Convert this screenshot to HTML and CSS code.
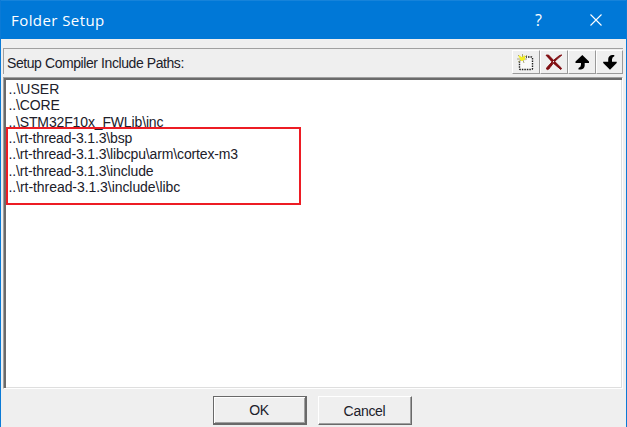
FILE: index.html
```html
<!DOCTYPE html>
<html lang="en">
<head>
<meta charset="utf-8">
<title>Folder Setup</title>
<link rel="stylesheet" href="styles.css">
</head>
<body>
<div class="window">
  <header class="titlebar">
    <h1 class="title">Folder Setup</h1>
    <span class="help">?</span>
    <svg class="close" width="12" height="12" viewBox="0 0 12 12"><path d="M.5 .5l11 11M11.5 .5l-11 11" stroke="#fff" stroke-width="1.1" fill="none"/></svg>
  </header>
  <main class="content">
    <div class="toolbar">
      <span class="label">Setup Compiler Include Paths:</span>
      <div class="tools">
        <button class="tool" aria-label="New"><svg width="18" height="17" viewBox="0 0 18 17"><rect x="2.5" y="3" width="13" height="12.5" rx="1" fill="#fafafa" stroke="#222" stroke-width="1.4" stroke-dasharray="1.5 1"/><path d="M0 0h9v7H0z" fill="#efefef"/><path d="M1 1l3 3M5.5 0v4M10 1L6 5M0 5h4M1 8l3-2M6 6l1 3M7 5h3" stroke="#aaa878" stroke-width="1"/><path d="M2 2l3 3M8 2L4 6M3 5l5 0M5 3v4" stroke="#f4ef28" stroke-width="1.8"/></svg></button>
        <button class="tool" aria-label="Delete"><svg width="18" height="17" viewBox="0 0 18 17"><path d="M1 1.2L3.5 1Q8 6 16.5 14.2L15.8 15.5Q9 10.5 1 1.2zM16.8 1L14.5 1.5Q8 6 2 13.5Q.8 15.5 2.5 15.6Q4 15.4 5 13.5Q9 7 16.8 1z" fill="#800c10" stroke="#800c10" stroke-width="1"/></svg></button>
        <button class="tool" aria-label="Move up"><svg width="18" height="17" viewBox="0 0 18 17"><path d="M9.3 1L16 7.6V9h-4.3v2.5Q11.5 15 8 15.5H5.5V14Q8 13 8 10.8V9H2.5V7.6z" fill="#000"/></svg></button>
        <button class="tool last" aria-label="Move down"><svg width="18" height="17" viewBox="0 0 18 17"><path d="M9 15.7L15.7 9V7.8H11V5.5Q11 3 13.3 2.3V1H11Q7.2 1.7 7.2 5.3V7.8H2.2V9z" fill="#000"/></svg></button>
      </div>
    </div>
    <div class="list">
      <ul class="paths">
        <li class="user">..\USER</li>
        <li>..\CORE</li>
        <li>..\STM32F10x_FWLib\inc</li>
        <li>..\rt-thread-3.1.3\bsp</li>
        <li>..\rt-thread-3.1.3\libcpu\arm\cortex-m3</li>
        <li>..\rt-thread-3.1.3\include</li>
        <li class="libc">..\rt-thread-3.1.3\include\libc</li>
      </ul>
      <div class="highlight"></div>
    </div>
    <footer class="actions">
      <button class="btn ok">OK</button>
      <button class="btn cancel">Cancel</button>
    </footer>
  </main>
</div>
</body>
</html>
```

FILE: styles.css
```css
* { box-sizing: border-box; }
body { margin: 0; font-family: "Liberation Sans", Arial, sans-serif; font-size: 14px; color: #20202a; }
button { font: inherit; color: inherit; padding: 0; margin: 0; border-radius: 0; }
svg { display: block; }
.window { width: 627px; height: 427px; overflow: hidden; background: #efefef; border: solid #0b7ad6; border-width: 0 1px; }
.titlebar { height: 39px; background: #0078d7; border-top: 1px solid #1683da; color: #fff; display: flex; align-items: center; padding: 0 24px 0 10px; }
.title { margin: 0; flex: 1; font: 400 15px/20px "Open Sans", "Noto Sans", sans-serif; letter-spacing: .43px; }
.help { font: 400 16px/20px "Open Sans", "Noto Sans", sans-serif; margin-right: 48px; }
.content { padding: 9px 3px 0 2px; }
.toolbar { height: 26px; display: flex; border: solid #a0a0a0; border-width: 1px 0 0 1px; }
.label { flex: 1; padding: 5px 0 0 3px; line-height: 18px; white-space: nowrap; letter-spacing: -.42px; }
.tools { display: flex; padding-top: 1px; }
.tool { width: 28px; height: 24px; background: #efefef; border: 1px solid; border-color: #fff #999 #999 #fff; display: flex; align-items: center; justify-content: center; }
.last { width: 27px; }
.list { position: relative; height: 312px; margin-top: 3px; background: #fff; border: 1px solid; border-color: #a0a0a0 #fff #fff #a0a0a0; box-shadow: inset 2px 2px #6b6b6b, inset -1px -1px #dedede; }
.paths { list-style: none; margin: 0; padding: 3px 0 0 4.5px; line-height: 16.33px; }
.paths li { height: 16.33px; white-space: nowrap; letter-spacing: -.14px; }
.paths .user { letter-spacing: .05px; }
.paths .libc { letter-spacing: -.06px; }
.highlight { position: absolute; left: 2px; top: 49px; width: 295px; height: 78px; border: 2px solid #ed1c24; }
.actions { display: flex; justify-content: center; gap: 11px; padding: 7px 2px 0 0; }
.btn { width: 94px; height: 29px; background: #efefef; line-height: 18px; letter-spacing: -.3px; border: 1px solid; }
.ok { border-color: #696969; border-width: 1px 2px 2px 1px; box-shadow: inset 1px 1px #fff, inset -1px -1px #a0a0a0; }
.cancel { border-color: #fff #696969 #696969 #fff; box-shadow: inset -1px -1px #a0a0a0; }
```
